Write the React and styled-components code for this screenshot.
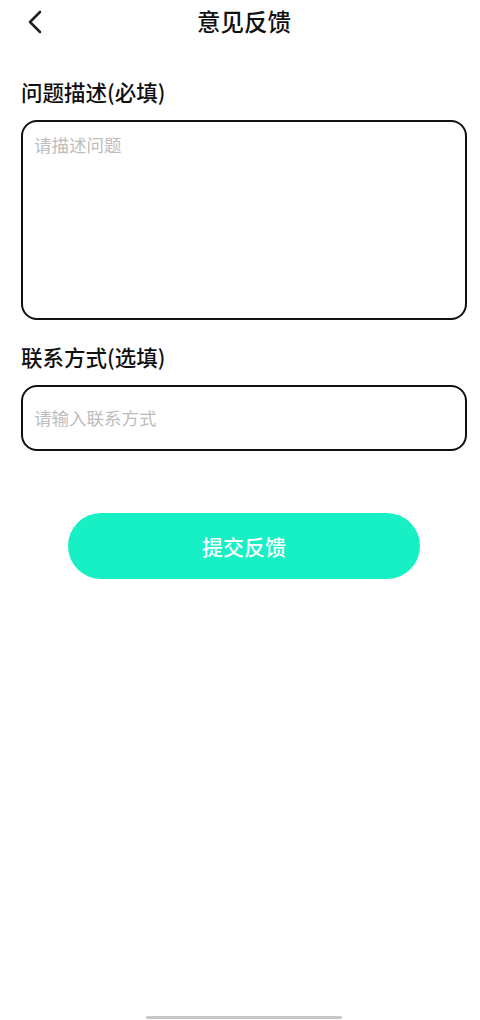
import styled, { createGlobalStyle } from "styled-components";

const GlobalStyle = createGlobalStyle`
  html, body {
    margin: 0;
    padding: 0;
    background: #fff;
  }
  body {
    font-family: "Noto Sans CJK SC", "Noto Sans", sans-serif;
    color: #111;
  }
  * {
    box-sizing: border-box;
  }
`;

const Page = styled.div`
  width: 480px;
  height: 1020px;
  display: flex;
  flex-direction: column;
  background: #fff;
`;

const Header = styled.header`
  height: 44px;
  display: flex;
  align-items: center;
  justify-content: center;
  position: relative;
`;

const BackButton = styled.button`
  position: absolute;
  left: 20px;
  top: 5px;
  width: 30px;
  height: 34px;
  padding: 0;
  border: none;
  background: none;
  display: flex;
  align-items: center;
  justify-content: center;
`;

const Title = styled.h1`
  margin: 0 0 0 8px;
  font-size: 23.5px;
  font-weight: 500;
  line-height: 1;
  color: #111;
`;

const Form = styled.div`
  display: flex;
  flex-direction: column;
  padding: 34px 13px 0 21px;
`;

const Label = styled.div`
  font-size: 21.5px;
  font-weight: 500;
  line-height: 28px;
  color: #111;
  margin-top: ${(p) => p.$gap || 0}px;
  margin-bottom: 14px;
`;

const Field = styled.div`
  border: 2.8px solid #111;
  border-radius: 16px;
  height: ${(p) => p.$height}px;
  padding: ${(p) => p.$pad};
  display: flex;
  align-items: ${(p) => (p.$multi ? "flex-start" : "center")};
`;

const Placeholder = styled.span`
  font-size: 17.5px;
  line-height: 1;
  color: #bdbdbd;
`;

const SubmitButton = styled.button`
  align-self: center;
  margin-top: 62px;
  width: 352px;
  height: 66px;
  border: none;
  border-radius: 33px;
  background: #17f0c4;
  color: #fff;
  font-family: "Noto Sans CJK SC", "Noto Sans", sans-serif;
  font-size: 21px;
  font-weight: 500;
`;

const Spacer = styled.div`
  flex: 1;
`;

const HomeBar = styled.div`
  align-self: center;
  width: 196px;
  height: 3px;
  border-radius: 2px;
  background: #c6c6c6;
  margin-bottom: 1px;
  transform: translateX(4px);
`;

export default function App() {
  return (
    <>
      <GlobalStyle />
      <Page>
        <Header>
          <BackButton aria-label="back">
            <svg width="16" height="24" viewBox="0 0 16 24">
              <path
                d="M13 2 L3 12 L13 22"
                fill="none"
                stroke="#222"
                strokeWidth="2.6"
                strokeLinecap="round"
                strokeLinejoin="round"
              />
            </svg>
          </BackButton>
          <Title>意见反馈</Title>
        </Header>
        <Form>
          <Label>问题描述(必填)</Label>
          <Field $height={200} $pad="14px 11px" $multi>
            <Placeholder>请描述问题</Placeholder>
          </Field>
          <Label $gap={23}>联系方式(选填)</Label>
          <Field $height={66} $pad="0 11px">
            <Placeholder>请输入联系方式</Placeholder>
          </Field>
          <SubmitButton>提交反馈</SubmitButton>
        </Form>
        <Spacer />
        <HomeBar />
      </Page>
    </>
  );
}
